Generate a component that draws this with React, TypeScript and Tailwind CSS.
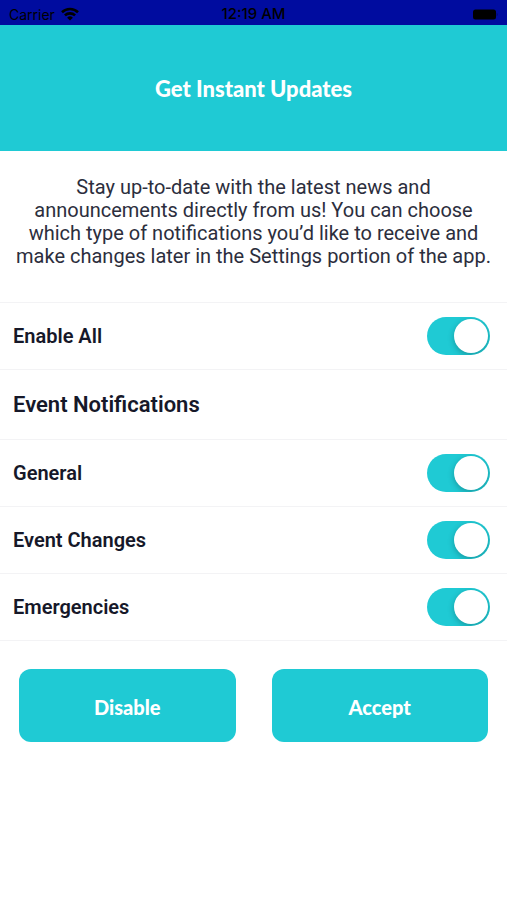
import React, { useState } from "react";

type Topic = "general" | "changes" | "emergencies";

const topics: { id: Topic; label: string }[] = [
  { id: "general", label: "General" },
  { id: "changes", label: "Event Changes" },
  { id: "emergencies", label: "Emergencies" },
];

interface ToggleRowProps {
  id: string;
  label: string;
  checked: boolean;
  onChange: (checked: boolean) => void;
}

const ToggleRow: React.FC<ToggleRowProps> = ({ id, label, checked, onChange }) => (
  <div className="flex items-center justify-between border-b border-[#f3f3f5] py-[14px] pr-[17px] pl-[13px]">
    <label htmlFor={id} className="text-[20px] leading-6 font-semibold">
      {label}
    </label>
    <input
      id={id}
      type="checkbox"
      role="switch"
      checked={checked}
      onChange={(e) => onChange(e.target.checked)}
      className="flex h-[38px] w-[63px] shrink-0 cursor-pointer appearance-none items-center overflow-hidden rounded-full bg-gray-200 p-0.5 before:size-[34px] before:rounded-full before:bg-white before:shadow-[0_2px_6px_rgba(0,0,0,0.25)] checked:justify-end checked:bg-[#1fcad4]"
    />
  </div>
);

const StatusBar: React.FC = () => (
  <div className="grid h-[25px] grid-cols-3 items-center bg-[#000c9f] px-[9px] pt-[3px] font-[Inter,sans-serif] text-[15px] text-black">
    <div className="flex items-center gap-1.5">
      <span className="text-[14px]">Carrier</span>
      <svg viewBox="0 0 18 14" className="h-[14px] w-[18px]" fill="none" stroke="currentColor" strokeWidth="2.6">
        <path d="M1 5.2a11.5 11.5 0 0 1 16 0" />
        <path d="M3.9 8.4a7.4 7.4 0 0 1 10.2 0" />
        <path d="M9 13.6 6.1 10.7a4.1 4.1 0 0 1 5.8 0z" fill="currentColor" stroke="none" />
      </svg>
    </div>
    <span className="text-center font-medium">12:19 AM</span>
    <div className="flex justify-end">
      <svg viewBox="0 0 25 11" className="h-[11px] w-[25px]" fill="currentColor">
        <rect x="0" y="0.5" width="23" height="10" rx="2.5" />
        <path d="M23.6 3.8v3.400c.7-.2 1.200-.9 1.200-1.700s-.5-1.500-1.200-1.700z" opacity="0.3" />
      </svg>
    </div>
  </div>
);

const App: React.FC = () => {
  const [enabled, setEnabled] = useState<Record<Topic, boolean>>({
    general: true,
    changes: true,
    emergencies: true,
  });

  const setAll = (value: boolean) =>
    setEnabled({ general: value, changes: value, emergencies: value });

  return (
    <div className="min-h-screen bg-white font-[Roboto,sans-serif] text-[#161829]">
      <StatusBar />

      <header className="flex h-[126px] items-center justify-center bg-[#1fcad4] pt-0.5">
        <h1 className="font-[Lato,sans-serif] text-[22px] leading-6 font-black text-white">
          Get Instant Updates
        </h1>
      </header>

      <main>
        <p className="border-b border-[#f3f3f5] px-3 pt-[25px] pb-[34px] text-center text-[20px] leading-[23px] text-[#2c2e3d]">
          Stay up-to-date with the latest news and announcements directly from us! You can choose
          which type of notifications you’d like to receive and make changes later in the Settings
          portion of the app.
        </p>

        <ToggleRow
          id="all"
          label="Enable All"
          checked={topics.every((t) => enabled[t.id])}
          onChange={setAll}
        />

        <h2 className="border-b border-[#f3f3f5] px-[13px] pt-[23px] pb-[22px] text-[22px] leading-6 font-semibold">
          Event Notifications
        </h2>

        {topics.map((t) => (
          <ToggleRow
            key={t.id}
            id={t.id}
            label={t.label}
            checked={enabled[t.id]}
            onChange={(value) => setEnabled({ ...enabled, [t.id]: value })}
          />
        ))}

        {/* Actions */}
        <div className="grid grid-cols-2 gap-9 px-[19px] py-7 font-[Lato,sans-serif] text-[20px] font-black text-white">
          <button
            className="h-[73px] cursor-pointer rounded-xl bg-[#1fcad4] pt-0.5"
            onClick={() => setAll(false)}
          >
            Disable
          </button>
          <button className="h-[73px] cursor-pointer rounded-xl bg-[#1fcad4] pt-0.5">Accept</button>
        </div>
      </main>
    </div>
  );
};

export default App;
